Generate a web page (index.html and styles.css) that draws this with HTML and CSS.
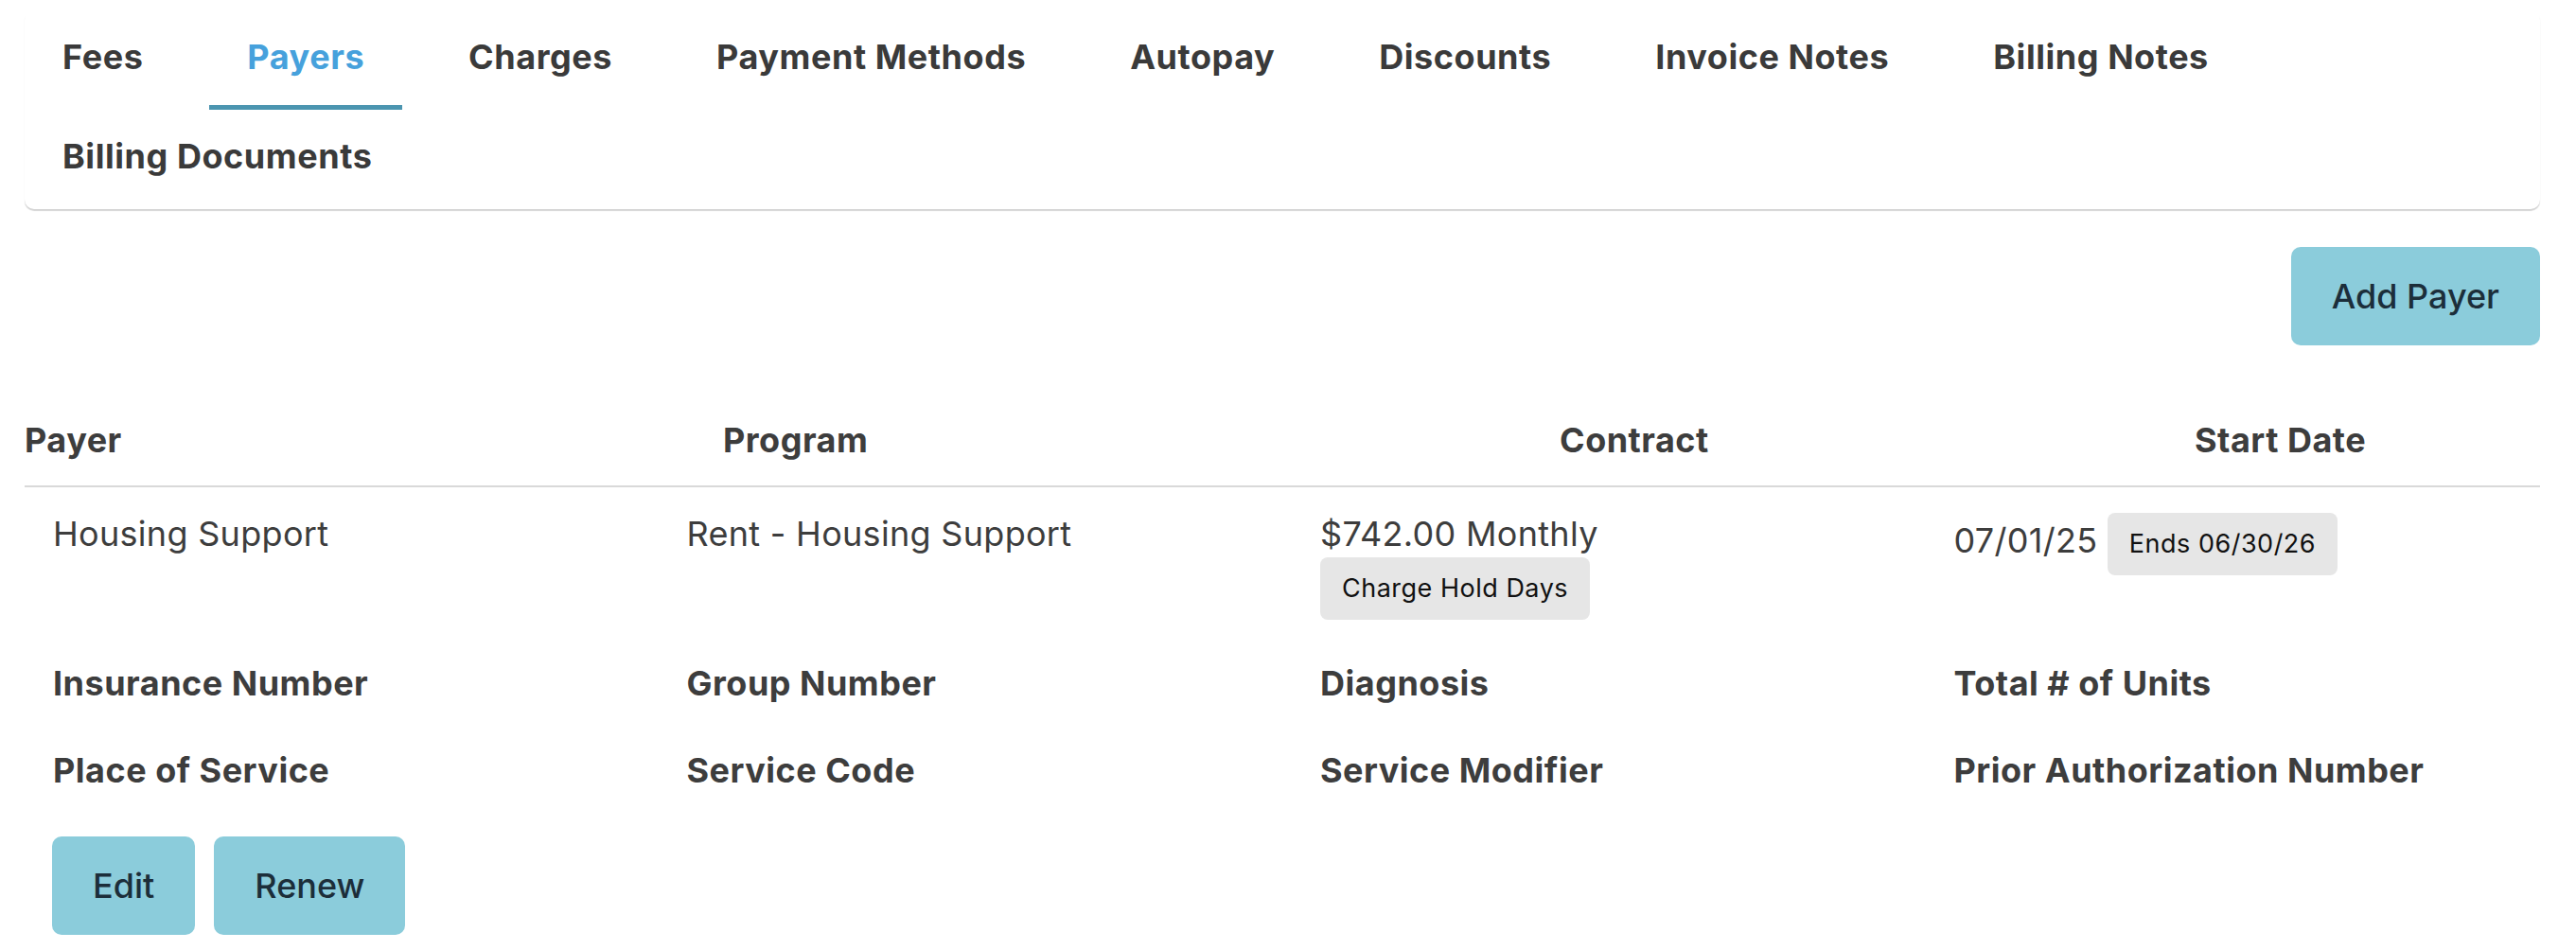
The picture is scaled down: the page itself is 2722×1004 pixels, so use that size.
FILE: index.html
```html
<!DOCTYPE html>
<html lang="en">
<head>
    <meta charset="UTF-8">
    <meta name="viewport" content="width=device-width, initial-scale=1.0">
    <title>Billing - Payers</title>
    <link rel="stylesheet" href="styles.css">
</head>
<body>
    <div class="page">
        <div class="card">
            <nav class="tabs">
                <a class="tab" href="#">Fees</a>
                <a class="tab active" href="#">Payers</a>
                <a class="tab" href="#">Charges</a>
                <a class="tab" href="#">Payment Methods</a>
                <a class="tab" href="#">Autopay</a>
                <a class="tab" href="#">Discounts</a>
                <a class="tab" href="#">Invoice Notes</a>
                <a class="tab" href="#">Billing Notes</a>
                <a class="tab" href="#">Billing Documents</a>
            </nav>
        </div>

        <div class="toolbar">
            <button class="btn">Add Payer</button>
        </div>

        <div class="payers">
            <div class="payers-head">
                <div>Payer</div>
                <div>Program</div>
                <div>Contract</div>
                <div>Start Date</div>
            </div>

            <div class="payer-row">
                <div class="cell">Housing Support</div>
                <div class="cell">Rent - Housing Support</div>
                <div class="cell">
                    <div class="amount">$742.00 Monthly</div>
                    <span class="badge">Charge Hold Days</span>
                </div>
                <div class="cell">07/01/25 <span class="badge badge-inline">Ends 06/30/26</span></div>

                <div class="label">Insurance Number</div>
                <div class="label">Group Number</div>
                <div class="label">Diagnosis</div>
                <div class="label">Total # of Units</div>

                <div class="label">Place of Service</div>
                <div class="label">Service Code</div>
                <div class="label">Service Modifier</div>
                <div class="label">Prior Authorization Number</div>
            </div>

            <div class="row-actions">
                <button class="btn">Edit</button>
                <button class="btn">Renew</button>
            </div>
        </div>
    </div>
</body>
</html>
```

FILE: styles.css
```css
body {
    margin: 0;
    font-family: Inter, "Noto Sans", sans-serif;
    font-size: 36px;
    line-height: 54px;
    color: #3d3d3d;
    background: #fff;
    letter-spacing: 0.3px;
}
.page {
    padding: 11px 38px 0 26px;
}
.card {
    background: #fff;
    border-radius: 10px;
    box-shadow: 0 2px 1px rgba(0,0,0,0.17);
}
.tabs {
    display: flex;
    flex-wrap: wrap;
    column-gap: 30px;
}
.tab {
    padding: 22px 40px 24px;
    border-bottom: 5px solid transparent;
    font-weight: 700;
    color: #3a3a3a;
    text-decoration: none;
    letter-spacing: 0.55px;
}
.tab.active {
    color: #46a1dc;
    border-bottom-color: #4b95b0;
}
.toolbar {
    display: flex;
    justify-content: flex-end;
    margin-top: 40px;
}
.btn {
    font-family: inherit;
    font-size: 36px;
    font-weight: 500;
    line-height: 54px;
    padding: 25px 43px;
    border: none;
    border-radius: 10px;
    background: #8bccdb;
    color: #1c2e3a;
    cursor: pointer;
}
.payers-head {
    display: grid;
    grid-template-columns: 738px 884px 671px 1fr;
    margin-top: 73px;
    padding-bottom: 21px;
    border-bottom: 2px solid #d9d9d9;
    font-weight: 700;
    letter-spacing: 0.5px;
}
.payer-row {
    display: grid;
    grid-template-columns: repeat(4, 1fr);
    gap: 42px 80px;
    padding: 24px 30px 0 30px;
    line-height: 50px;
}
.label {
    font-weight: 700;
    letter-spacing: 0.5px;
}
.badge {
    display: inline-block;
    padding: 12px 23px;
    font-size: 27px;
    line-height: 42px;
    letter-spacing: 0.5px;
    color: #111;
    background: #e6e6e6;
    border-radius: 8px;
}
.badge-inline {
    margin-top: 3px;
}
.row-actions {
    display: flex;
    gap: 20px;
    margin-top: 45px;
    padding-left: 29px;
}
```
